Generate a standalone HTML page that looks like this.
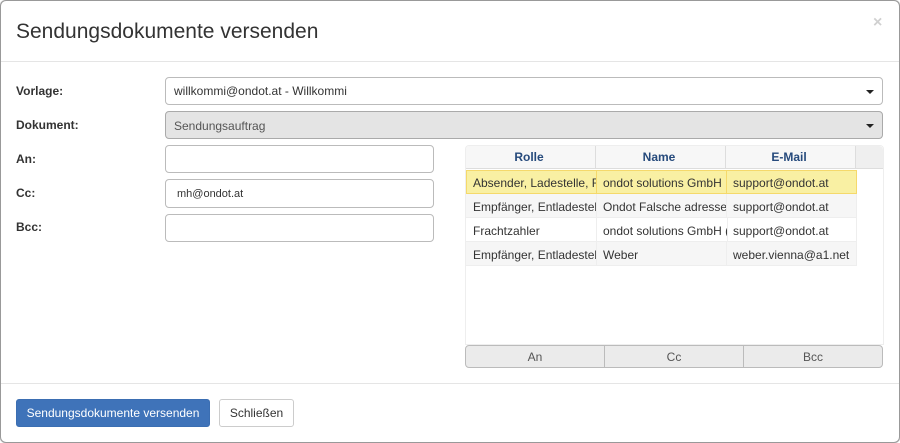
<!DOCTYPE html>
<html lang="de"><head><meta charset="utf-8"><title>Sendungsdokumente versenden</title>
<style>
*{box-sizing:border-box}
html,body{margin:0;padding:0;width:900px;height:443px;overflow:hidden;background:#fff}
body{font:12px/17px "Liberation Sans",Arial,sans-serif;color:#333;position:relative}
.a{position:absolute;white-space:nowrap}
#modal{left:0;top:0;width:900px;height:443px;border:1px solid #999;border-radius:6px;box-shadow:0 0 1px #777}
.hr{left:1px;width:898px;height:1px;background:#e5e5e5}
.lbl{left:16px;font-weight:bold;color:#333;height:17px}
.sel{left:165px;width:718px;height:28px;border:1px solid #bbb;border-radius:4px;background:#fff;padding:5px 8px;color:#333}
.sel.dis{background:#e4e4e4;border-color:#aaa;color:#555;padding-top:6px}
.sel i{position:absolute;right:8px;top:12px;width:0;height:0;border-left:4px solid transparent;border-right:4px solid transparent;border-top:4px solid #222}
.inp{left:165px;width:269px;border:1px solid #bbb;border-radius:4px;background:#fff;padding:6px 11px 5px;color:#333;font-size:11px}
.th{top:146px;height:23px;background:#f7f7f7;border-right:1px solid #ddd;border-bottom:1px solid #ddd;text-align:center;font-weight:bold;color:#264a7c;line-height:22px;padding-right:3px}
.td{height:24px;line-height:27px;padding:0 6px;overflow:hidden;color:#333;border-right:1px solid #eee;border-bottom:1px solid #eee}
.td.f{padding-left:7px}
.alt{background:#f6f6f6}
.sel1{background:#f9f0a3;border-top:1px solid #f5d96b;border-bottom:1px solid #f5d96b;border-right:1px solid #f5d96b;line-height:25px}
.btn{top:399px;height:28px;border-radius:3px;text-align:center;line-height:27px}
.seg{top:345px;height:23px;background:#ebebeb;border:1px solid #bbb;text-align:center;line-height:22px;color:#555}
</style></head><body>
<div class="a" id="modal"></div>
<div class="a" style="left:16px;top:18px;font-size:21px;line-height:28px;color:#333">Sendungsdokumente versenden</div>
<div class="a" style="left:873px;top:14px;font-size:16px;line-height:18px;font-weight:bold;color:#d0d0d0">×</div>
<div class="a hr" style="top:61px"></div>

<div class="a lbl" style="top:83px">Vorlage:</div>
<div class="a lbl" style="top:117px">Dokument:</div>
<div class="a lbl" style="top:151px">An:</div>
<div class="a lbl" style="top:185px">Cc:</div>
<div class="a lbl" style="top:219px">Bcc:</div>

<div class="a sel" style="top:77px">willkommi@ondot.at - Willkommi<i></i></div>
<div class="a sel dis" style="top:111px">Sendungsauftrag<i></i></div>
<div class="a inp" style="top:145px;height:28px"></div>
<div class="a inp" style="top:179px;height:29px">mh@ondot.at</div>
<div class="a inp" style="top:214px;height:28px"></div>

<div class="a" style="left:465px;top:145px;width:419px;height:200px;border:1px solid #eee;border-radius:4px 4px 0 0"></div>
<div class="a" style="left:466px;top:146px;width:417px;height:23px;background:#efefef;border-bottom:1px solid #ddd;border-radius:4px 4px 0 0"></div>
<div class="a th" style="left:466px;width:130px;border-radius:4px 0 0 0">Rolle</div>
<div class="a th" style="left:596px;width:130px">Name</div>
<div class="a th" style="left:726px;width:130px">E-Mail</div>

<div class="a td sel1" style="left:466px;top:170px;width:131px;border-left:1px solid #f5d96b">Absender, Ladestelle, Frachtzahler</div>
<div class="a td sel1" style="left:597px;top:170px;width:130px">ondot solutions GmbH</div>
<div class="a td sel1" style="left:727px;top:170px;width:130px">support@ondot.at</div>

<div class="a td alt f" style="left:466px;top:194px;width:131px">Empfänger, Entladestelle</div>
<div class="a td alt" style="left:597px;top:194px;width:130px">Ondot Falsche adresse</div>
<div class="a td alt" style="left:727px;top:194px;width:130px">support@ondot.at</div>

<div class="a td f" style="left:466px;top:218px;width:131px">Frachtzahler</div>
<div class="a td" style="left:597px;top:218px;width:130px;padding-right:0;border-right:0">ondot solutions GmbH (</div>
<div class="a td" style="left:727px;top:218px;width:130px;border-left:1px solid #eee;padding-left:5px">support@ondot.at</div>

<div class="a td alt f" style="left:466px;top:242px;width:131px">Empfänger, Entladestelle</div>
<div class="a td alt" style="left:597px;top:242px;width:130px">Weber</div>
<div class="a td alt" style="left:727px;top:242px;width:130px">weber.vienna@a1.net</div>

<div class="a seg" style="left:465px;width:140px;border-radius:4px 0 0 4px">An</div>
<div class="a seg" style="left:604px;width:140px">Cc</div>
<div class="a seg" style="left:743px;width:140px;border-radius:0 4px 4px 0">Bcc</div>

<div class="a hr" style="top:383px"></div>
<div class="a btn" style="left:16px;width:194px;background:#3f73b9;color:#fff;border:1px solid #3b6eb2">Sendungsdokumente versenden</div>
<div class="a btn" style="left:219px;width:75px;background:#fff;color:#333;border:1px solid #ccc">Schließen</div>
</body></html>
